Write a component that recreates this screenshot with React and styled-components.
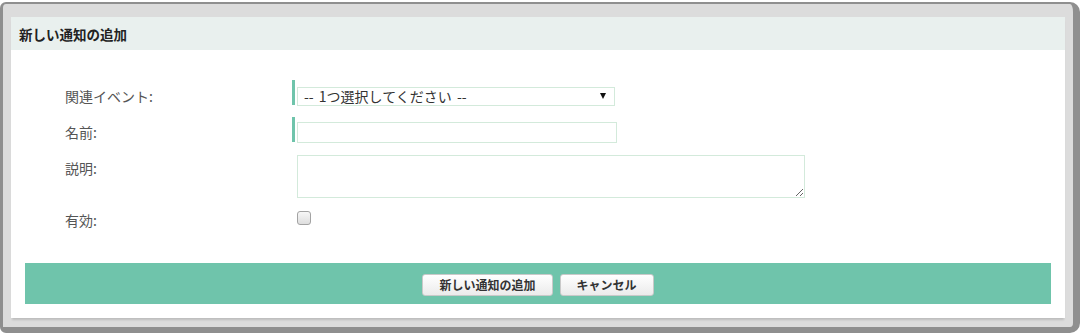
import React from "react";
import styled, { createGlobalStyle } from "styled-components";

const GlobalStyle = createGlobalStyle`
  body {
    margin: 0;
    background: #fff;
    font-family: "Noto Sans CJK JP", "Noto Sans", sans-serif;
  }
`;

const Frame = styled.div`
  box-sizing: border-box;
  height: 331px;
  margin: 2px 1px 0 0;
  display: flex;
  padding: 13px 8px 9px 8px;
  background: #dcdcdc;
  border: solid #8f8f8f;
  border-width: 2px 7px 6px 3px;
  border-radius: 6px 10px 10px 6px;
`;

const Panel = styled.section`
  flex: 1;
  display: flex;
  flex-direction: column;
  background: #fff;
  box-shadow: 0 3px 2px -1px rgba(0, 0, 0, 0.14);
`;

const Header = styled.h2`
  margin: 0;
  height: 33px;
  display: flex;
  align-items: center;
  padding: 0 8px;
  background: #e9f0ee;
  font-size: 13.5px;
  font-weight: bold;
  color: #222;
`;

const Body = styled.div`
  flex: 1;
  display: flex;
  flex-direction: column;
  padding: 30px 14px 14px;
`;

const Form = styled.div`
  padding-left: 40px;
`;

const Row = styled.div`
  display: grid;
  grid-template-columns: 227px auto;
  align-items: start;
  margin-top: ${(p) => p.$gap || 0}px;
`;

const Label = styled.label`
  font-size: 14px;
  color: #555;
  line-height: ${(p) => p.$lh}px;
  padding-top: ${(p) => p.$pt || 0}px;
`;

const Field = styled.div`
  display: flex;
  align-items: flex-start;
  padding-left: ${(p) => (p.$required ? 0 : 5)}px;
`;

const RequiredBar = styled.span`
  flex: none;
  width: 3px;
  height: 25px;
  margin-right: 2px;
  background: #6fc4ab;
`;

const SelectWrap = styled.div`
  position: relative;
  margin-top: 7px;
`;

const Select = styled.select`
  display: block;
  box-sizing: border-box;
  width: 318px;
  height: 19px;
  margin: 0;
  padding: 0 20px 0 6px;
  appearance: none;
  border: 1px solid #d3eadb;
  border-radius: 0;
  background: #fff;
  font-family: inherit;
  font-size: 14px;
  word-spacing: 2px;
  line-height: 17px;
  color: #333;
  outline: none;
`;

const Arrow = styled.svg`
  position: absolute;
  right: 9px;
  top: 6px;
  pointer-events: none;
`;

const TextInput = styled.input`
  display: block;
  box-sizing: border-box;
  width: 320px;
  height: 21px;
  margin: 5px 0 0;
  padding: 0 4px;
  border: 1px solid #d3eadb;
  font-family: inherit;
  font-size: 13px;
  outline: none;
`;

const TextArea = styled.textarea`
  display: block;
  box-sizing: border-box;
  width: 508px;
  height: 43px;
  margin: 0;
  border: 1px solid #d3eadb;
  font-family: inherit;
  font-size: 13px;
  outline: none;
`;

const Checkbox = styled.input`
  appearance: none;
  display: block;
  width: 14px;
  height: 14px;
  margin: 0;
  border: 1px solid #a3a3a3;
  border-radius: 3px;
  background: linear-gradient(#f7f7f7, #dedede);
`;

const Footer = styled.div`
  margin-top: auto;
  height: 41px;
  box-sizing: border-box;
  padding-top: 11px;
  display: flex;
  justify-content: center;
  align-items: flex-start;
  gap: 7px;
  background: #6fc4ab;
`;

const Button = styled.button`
  height: 22px;
  padding: 0 16px;
  border: 1px solid #c9c9c9;
  border-radius: 3px;
  background: linear-gradient(#ffffff, #ebebeb);
  font-family: inherit;
  font-size: 12px;
  font-weight: bold;
  color: #333;
  line-height: 20px;
  cursor: pointer;
`;

export default function App() {
  return (
    <>
      <GlobalStyle />
      <Frame>
        <Panel>
          <Header>新しい通知の追加</Header>
          <Body>
            <Form>
              <Row>
                <Label $lh={19} $pt={7}>関連イベント:</Label>
                <Field $required>
                  <RequiredBar />
                  <SelectWrap>
                    <Select defaultValue="">
                      <option value="">-- 1つ選択してください --</option>
                    </Select>
                    <Arrow width="6" height="6" viewBox="0 0 6 6">
                      <polygon points="0,0 6,0 3,6" fill="#111" />
                    </Arrow>
                  </SelectWrap>
                </Field>
              </Row>
              <Row $gap={11}>
                <Label $lh={21} $pt={5}>名前:</Label>
                <Field $required>
                  <RequiredBar />
                  <TextInput type="text" />
                </Field>
              </Row>
              <Row $gap={12}>
                <Label $lh={19} $pt={4}>説明:</Label>
                <Field>
                  <TextArea />
                </Field>
              </Row>
              <Row $gap={13}>
                <Label $lh={19}>有効:</Label>
                <Field>
                  <Checkbox type="checkbox" />
                </Field>
              </Row>
            </Form>
            <Footer>
              <Button>新しい通知の追加</Button>
              <Button>キャンセル</Button>
            </Footer>
          </Body>
        </Panel>
      </Frame>
    </>
  );
}
